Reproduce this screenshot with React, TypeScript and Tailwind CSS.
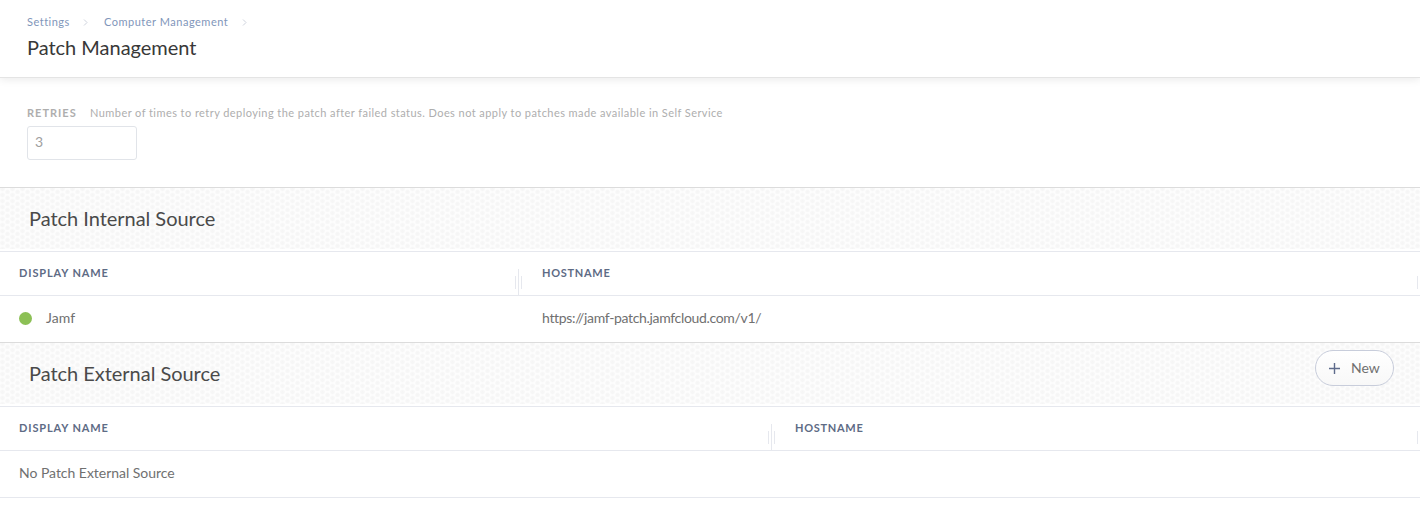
import React from "react";

const dots =
  "bg-[radial-gradient(circle_at_2.5px_1px,#f5f5f5_0,#f7f7f7_1.7px,transparent_2.9px),radial-gradient(circle_at_2.5px_7px,#f5f5f5_0,#f7f7f7_1.7px,transparent_2.9px),radial-gradient(circle_at_7.5px_4px,#f5f5f5_0,#f7f7f7_1.7px,transparent_2.9px)] bg-[length:10px_6px] bg-[#fdfdfd]";

function Chevron() {
  return (
    <svg width="5" height="7" viewBox="0 0 5 7" fill="none" stroke="#cdd2dc" strokeWidth="1">
      <path d="M1 .5l3 3-3 3" />
    </svg>
  );
}

function Grip() {
  return (
    <div className="flex h-[26px] w-[7px] items-center justify-between self-end">
      <i className="h-[13px] w-px bg-[#e6e8ee]" />
      <i className="h-full w-px bg-[#e6e8ee]" />
      <i className="h-[13px] w-px bg-[#e6e8ee]" />
    </div>
  );
}

function Band({ title, children }: { title: string; children?: React.ReactNode }) {
  return (
    <div className="h-[64px] border-t border-[#dcdcdc]">
      <div className={"flex h-[61px] justify-between pl-[29px] pr-[26px] " + dots}>
        <h2 className="pt-[15px] text-[20px] leading-[30px] tracking-[-0.03px] text-[#4a4a4a]">{title}</h2>
        {children}
      </div>
    </div>
  );
}

function TableHead({ first }: { first: string }) {
  return (
    <div className="flex h-[45px] border-y border-[#e6e8ee] text-[11px] font-bold leading-[41px] text-[#5e6b85]">
      <div className={"flex shrink-0 justify-between pl-[19px] " + first}>
        <span className="tracking-[0.88px]">DISPLAY NAME</span>
        <Grip />
      </div>
      <div className="flex grow justify-between pl-[20px]">
        <span className="tracking-[0.7px]">HOSTNAME</span>
        <i className="mb-[6px] mr-[2px] h-[13px] w-px self-end bg-[#e6e8ee]" />
      </div>
    </div>
  );
}

export default function App() {
  return (
    <div className="h-[507px] w-[1420px] overflow-hidden bg-white font-['Lato','Open_Sans',sans-serif]">
      <header className="h-[78px] border-b border-[#e4e4e4] pl-[27px] pt-[14px] shadow-[0_2px_8px_rgba(0,0,0,0.08)]">
        <nav className="flex h-[16px] items-center text-[11px] leading-[16px] text-[#7f96ba]">
          <span className="w-[56px] tracking-[0.5px]">Settings</span>
          <Chevron />
          <span className="ml-[16px] w-[138px] tracking-[0.51px]">Computer Management</span>
          <Chevron />
        </nav>
        <h1 className="mt-[3px] text-[20px] leading-[28px] tracking-[-0.02px] text-[#383838]">Patch Management</h1>
      </header>
      <section className="h-[109px] pl-[27px] pt-[27px]">
        <div className="flex h-[16px] items-center text-[11px] leading-[16px] text-[#aeaeae]">
          <b className="w-[63px] tracking-[1px]">RETRIES</b>
          <span className="tracking-[0.436px]">
            Number of times to retry deploying the patch after failed status. Does not apply to patches made available in Self Service
          </span>
        </div>
        <div className="mt-[5px] h-[34px] w-[110px] rounded-[3px] border border-[#e1e4e9] pl-[7px] text-[14px] leading-[30px] text-[#a0a0a0]">
          3
        </div>
      </section>
      <Band title="Patch Internal Source" />
      <TableHead first="w-[522px]" />
      <div className="flex h-[46px] items-center pl-[19px] text-[14px] leading-[20px] text-[#707070]">
        <i className="mb-[2px] mr-[14px] size-[13px] rounded-full bg-[#8cc055]" />
        <span className="w-[496px] pb-[2px] tracking-[0.1px]">Jamf</span>
        <span className="pb-[2px] tracking-[-0.33px]">https://jamf-patch.jamfcloud.com/v1/</span>
      </div>
      <Band title="Patch External Source">
        <button className="mt-[7px] flex h-[36px] w-[79px] items-center rounded-full border border-[#c8cddb] bg-gradient-to-b from-white to-[#f8f8f8] pl-[13px] text-[14px] text-[#707070]">
          <svg width="11" height="11" viewBox="0 0 11 11" stroke="#5e6b8c" strokeWidth="1.4">
            <path d="M5.5 0v11M0 5.5h11" />
          </svg>
          <span className="ml-[11px] pb-[2px]">New</span>
        </button>
      </Band>
      <TableHead first="w-[775px]" />
      <div className="h-[47px] border-b border-[#e6e8ee] pl-[19px] text-[14px] leading-[44px] tracking-[-0.03px] text-[#707070]">
        No Patch External Source
      </div>
    </div>
  );
}
